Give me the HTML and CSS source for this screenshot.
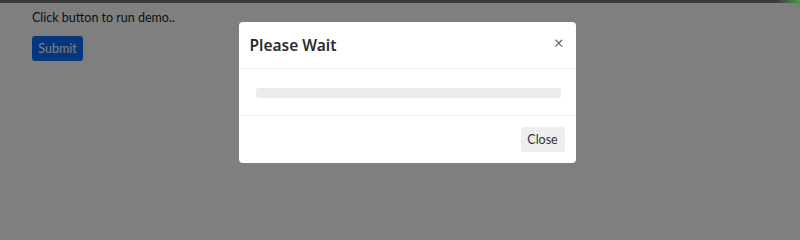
FILE: index.html
```html
<!DOCTYPE html>
<html>
<head>
<meta charset="utf-8">
<link rel="stylesheet" href="styles.css">
</head>
<body>
<div class="topbar"><span class="glow"></span></div>
<main class="page">
  <p class="intro">Click button to run demo..</p>
  <button class="btn-submit">Submit</button>
</main>
<div class="overlay">
  <div class="modal">
    <div class="modal-header">
      <h5 class="modal-title">Please Wait</h5>
      <span class="close">&times;</span>
    </div>
    <div class="modal-body">
      <div class="progress"></div>
    </div>
    <div class="modal-footer">
      <button class="btn-close">Close</button>
    </div>
  </div>
</div>
</body>
</html>
```
FILE: styles.css
```css
html, body {
  margin: 0;
  padding: 0;
  width: 800px;
  height: 240px;
  overflow: hidden;
  font-family: Lato, "Noto Sans", sans-serif;
  background: #fff;
}
.topbar {
  height: 3px;
  background: #3a3a3a;
  position: relative;
  z-index: 2;
}
.glow {
  position: absolute;
  right: 0;
  top: 0;
  width: 24px;
  height: 4px;
  background: linear-gradient(90deg, rgba(80,160,80,0), #4a9a4a);
}
.page {
  padding: 8px 32px;
}
.intro {
  margin: 0 0 11px 0;
  font-size: 12.5px;
  line-height: 14px;
  color: #212529;
}
.btn-submit {
  font-family: inherit;
  font-size: 12.5px;
  background: #0d6efd;
  color: #fff;
  border: none;
  border-radius: 3px;
  width: 51px;
  height: 25px;
  padding: 0;
}
.overlay {
  position: fixed;
  left: 0;
  top: 3px;
  right: 0;
  bottom: 0;
  background: rgba(0,0,0,0.5);
  display: flex;
  justify-content: center;
  align-items: flex-start;
  padding-top: 19px;
}
.modal {
  width: 337px;
  background: #fff;
  border-radius: 4px;
  margin-left: 14px;
}
.modal-header {
  height: 47px;
  box-sizing: border-box;
  border-bottom: 1px solid #f1f1f1;
  display: flex;
  align-items: center;
  justify-content: space-between;
  padding: 0 12px 0 11px;
}
.modal-title {
  margin: 0;
  font-family: "Noto Sans", sans-serif;
  font-size: 15.5px;
  font-weight: 600;
  color: #2a2d31;
}
.close {
  font-size: 17px;
  color: #666;
  line-height: 1;
  margin-top: -5px;
}
.modal-body {
  height: 47px;
  box-sizing: border-box;
  border-bottom: 1px solid #f1f1f1;
  padding: 19px 15px 0 17px;
}
.progress {
  height: 10px;
  background: #e9ecef;
  border-radius: 3px;
}
.modal-footer {
  height: 47px;
  box-sizing: border-box;
  display: flex;
  justify-content: flex-end;
  align-items: flex-start;
  padding: 11px 11px 0 0;
}
.btn-close {
  font-family: inherit;
  font-size: 12.5px;
  color: #333;
  background: #eeeeee;
  border: none;
  border-radius: 3px;
  width: 44px;
  height: 25px;
  padding: 0;
}
```
